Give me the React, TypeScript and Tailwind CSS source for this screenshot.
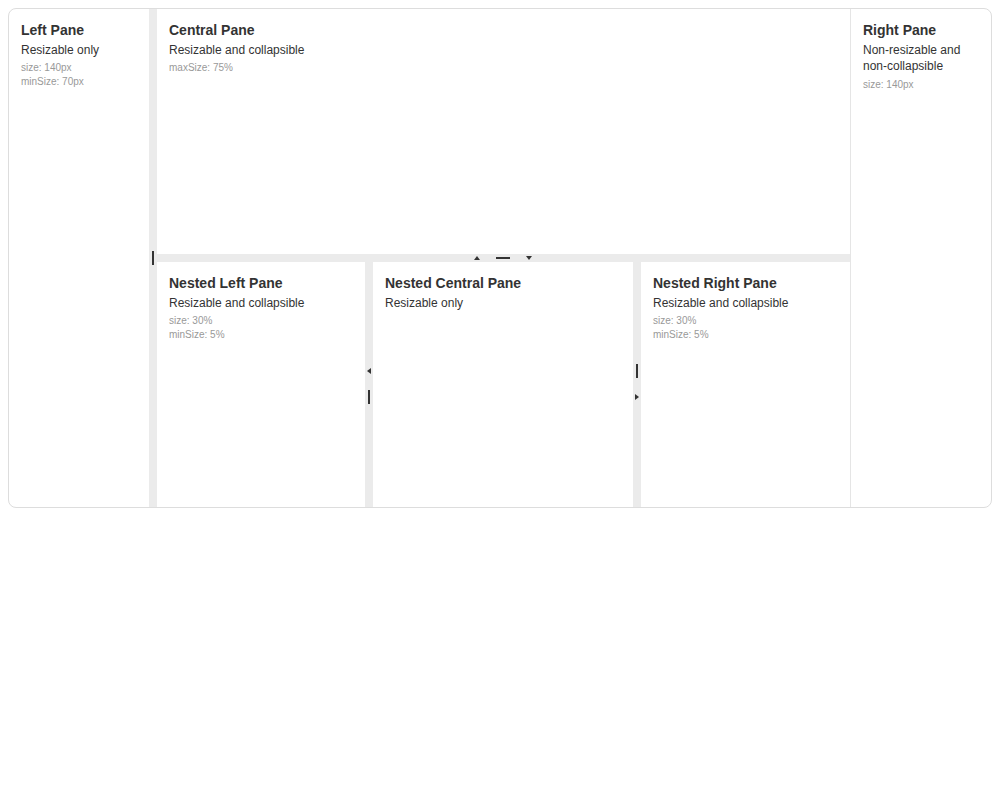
import React from "react";

function PaneText({
  title,
  desc,
  notes,
  notesGap = "mt-[3px]",
}: {
  title: string;
  desc: React.ReactNode;
  notes: string[];
  notesGap?: string;
}) {
  return (
    <div className="p-3">
      <h2 className="text-[14px] leading-[18px] font-bold text-[#333]">{title}</h2>
      <p className="mt-[3px] text-[12px] leading-[16px] text-[#333]">{desc}</p>
      <div className={`${notesGap} text-[10px] leading-[14px] text-[#999]`}>
        {notes.map((n) => (
          <div key={n}>{n}</div>
        ))}
      </div>
    </div>
  );
}

const Bar = () => <div className="w-[2px] h-[14px] bg-[#333]" />;
const HBar = () => <div className="h-[2px] w-[14px] bg-[#333]" />;

const ArrowLeft = () => (
  <div className="w-0 h-0 border-y-[3px] border-y-transparent border-r-[4px] border-r-[#333]" />
);
const ArrowRight = () => (
  <div className="w-0 h-0 border-y-[3px] border-y-transparent border-l-[4px] border-l-[#333]" />
);
const ArrowUp = () => (
  <div className="w-0 h-0 border-x-[3px] border-x-transparent border-b-[4px] border-b-[#333]" />
);
const ArrowDown = () => (
  <div className="w-0 h-0 border-x-[3px] border-x-transparent border-t-[4px] border-t-[#333]" />
);

export default function App() {
  return (
    <div className="bg-white min-h-screen p-2" style={{ fontFamily: '"Liberation Sans", Arial, sans-serif' }}>
      <div className="flex h-[500px] border border-[#ddd] rounded-lg overflow-hidden">
        {/* Left pane */}
        <div className="w-[140px] shrink-0">
          <PaneText title="Left Pane" desc="Resizable only" notes={["size: 140px", "minSize: 70px"]} />
        </div>
        <div className="w-2 shrink-0 bg-[#ebebeb] flex items-center justify-center">
          <Bar />
        </div>

        {/* Central column */}
        <div className="flex-1 flex flex-col min-w-0">
          <div className="h-[245px] shrink-0">
            <PaneText title="Central Pane" desc="Resizable and collapsible" notes={["maxSize: 75%"]} />
          </div>
          <div className="h-2 shrink-0 bg-[#ebebeb] flex items-center justify-center gap-4 pr-[2px]">
            <ArrowUp />
            <HBar />
            <ArrowDown />
          </div>
          <div className="flex-1 flex">
            <div className="w-[208px] shrink-0">
              <PaneText
                title="Nested Left Pane"
                desc="Resizable and collapsible"
                notes={["size: 30%", "minSize: 5%"]}
              />
            </div>
            <div className="w-2 shrink-0 bg-[#ebebeb] flex flex-col items-center justify-center gap-4 pt-[3px]">
              <ArrowLeft />
              <Bar />
            </div>
            <div className="flex-1">
              <PaneText title="Nested Central Pane" desc="Resizable only" notes={[]} />
            </div>
            <div className="w-2 shrink-0 bg-[#ebebeb] flex flex-col items-center justify-center gap-4 pb-[5px]">
              <Bar />
              <ArrowRight />
            </div>
            <div className="w-[209px] shrink-0">
              <PaneText
                title="Nested Right Pane"
                desc="Resizable and collapsible"
                notes={["size: 30%", "minSize: 5%"]}
              />
            </div>
          </div>
        </div>

        {/* Right pane */}
        <div className="w-[141px] shrink-0 border-l border-[#e5e5e5]">
          <PaneText
            title="Right Pane"
            desc={
              <>
                Non-resizable and
                <br />
                non-collapsible
              </>
            }
            notes={["size: 140px"]}
            notesGap="mt-[4px]"
          />
        </div>
      </div>
    </div>
  );
}
